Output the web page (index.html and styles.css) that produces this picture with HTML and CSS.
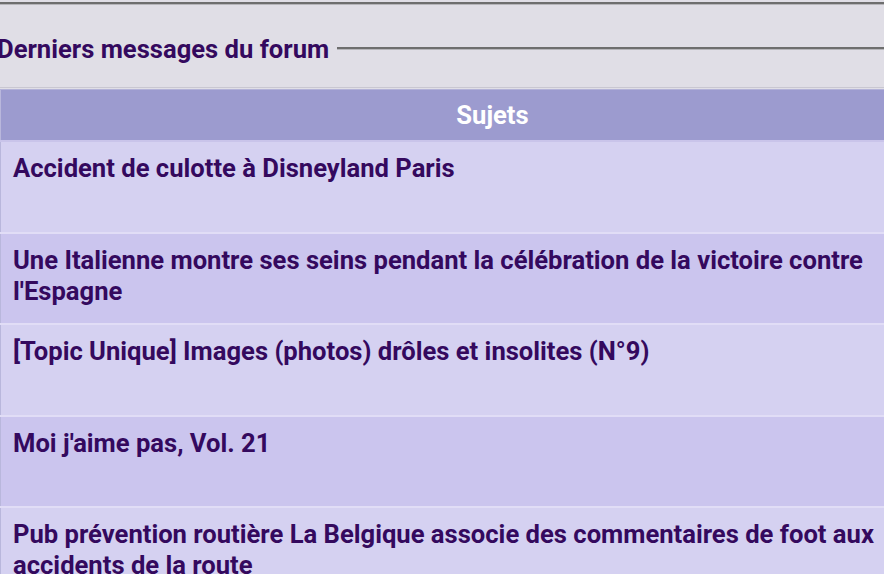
FILE: index.html
```html
<!DOCTYPE html>
<html lang="fr">
<head>
<meta charset="utf-8">
<link rel="stylesheet" href="styles.css">
</head>
<body>
<div class="page">
  <div class="topline"></div>
  <div class="section-title">
    <h2 class="title">Derniers messages du forum</h2>
    <div class="title-rule"></div>
  </div>
  <div class="section-sep"></div>
  <table class="topics">
    <thead>
      <tr><th class="head">Sujets</th></tr>
    </thead>
    <tbody>
      <tr class="odd"><td class="cell">Accident de culotte à Disneyland Paris</td></tr>
      <tr class="even"><td class="cell">Une Italienne montre ses seins pendant la célébration de la victoire contre l'Espagne</td></tr>
      <tr class="odd"><td class="cell">[Topic Unique] Images (photos) drôles et insolites (N°9)</td></tr>
      <tr class="even"><td class="cell">Moi j'aime pas, Vol. 21</td></tr>
      <tr class="odd"><td class="cell">Pub prévention routière La Belgique associe des commentaires de foot aux accidents de la route</td></tr>
    </tbody>
  </table>
</div>
</body>
</html>
```

FILE: styles.css
```css
html, body {
  margin: 0;
  padding: 0;
  background: #e0dee6;
  overflow: hidden;
}
body {
  font-family: Roboto, "Liberation Sans", sans-serif;
  color: #34095e;
}
.page {
  width: 884px;
  height: 574px;
  overflow: hidden;
  padding-top: 2px;
}
.topline {
  height: 2px;
  background: #6e6e6e;
  border-bottom: 1px solid #b6b5ba;
}
.section-title {
  display: flex;
  align-items: center;
  gap: 8px;
  height: 76px;
  padding-top: 6px;
  margin-left: -3px;
}
.title {
  margin: 0;
  font-size: 25.6px;
  font-weight: 700;
  line-height: 31px;
  color: #34095e;
  white-space: nowrap;
}
.title-rule {
  flex: 1;
  height: 2px;
  background: #6e6e6e;
  border-bottom: 1px solid #b6b5ba;
  margin-top: -2px;
}
.section-sep {
  height: 1px;
  background: #c9c7d1;
}
.topics {
  width: 984px;
  border-collapse: collapse;
  margin-top: 1px;
  border-left: 1px solid #b9b7dc;
}
.head {
  background: #9c9bcf;
  color: #ffffff;
  font-size: 25.6px;
  font-weight: 700;
  height: 50px;
  padding: 0;
  text-align: center;
  border-top: 1px solid #b3b2d8;
  border-bottom: 2px solid #c9c4ea;
}
.cell {
  font-size: 25.6px;
  font-weight: 700;
  line-height: 31px;
  height: 91.5px;
  box-sizing: border-box;
  padding: 11px 100px 0 12px;
  vertical-align: top;
  text-align: left;
  border-bottom: 2px solid #e1ddf6;
  color: #34095e;
}
.odd .cell { background: #d5d1f1; }
.even .cell { background: #cbc5ee; }
```
